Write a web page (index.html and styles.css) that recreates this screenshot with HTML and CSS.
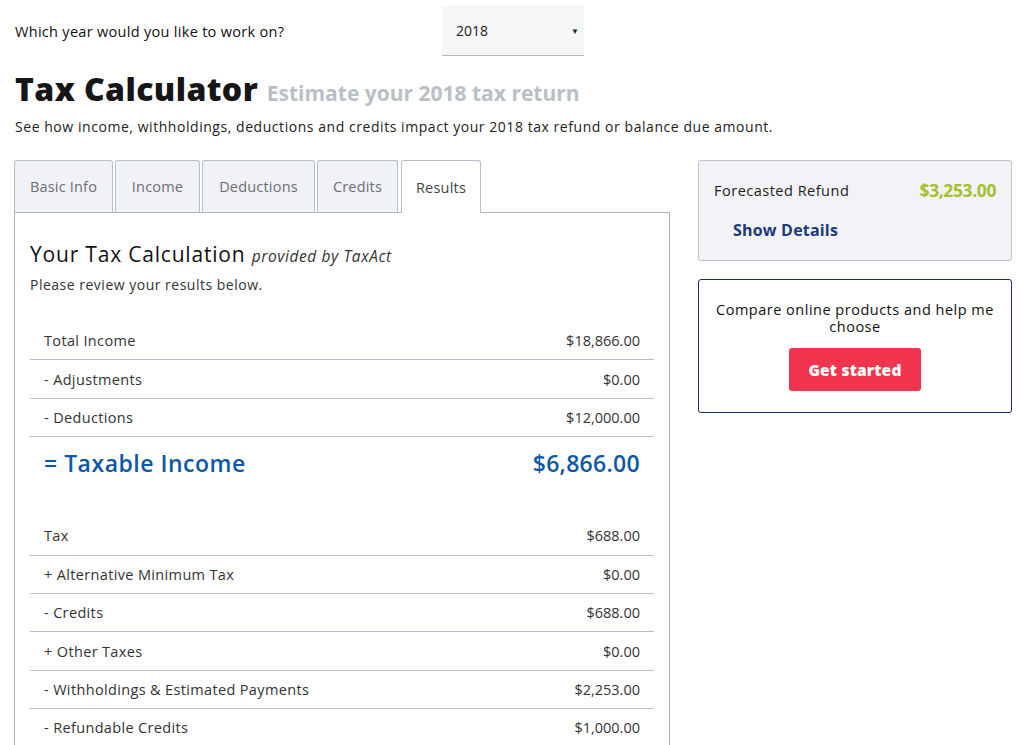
FILE: index.html
```html
<!DOCTYPE html>
<html>
<head>
<meta charset="utf-8">
<link rel="stylesheet" href="styles.css">
</head>
<body>
<div class="page">
  <div class="year-row">
    <label class="year-label">Which year would you like to work on?</label>
    <div class="year-select"><span>2018</span><span class="caret">▼</span></div>
  </div>
  <h1 class="title">Tax Calculator <span class="subtitle">Estimate your 2018 tax return</span></h1>
  <p class="intro">See how income, withholdings, deductions and credits impact your 2018 tax refund or balance due amount.</p>

  <div class="layout">
    <div class="main">
      <div class="tabs">
        <div class="tab t1">Basic Info</div>
        <div class="tab t2">Income</div>
        <div class="tab t3">Deductions</div>
        <div class="tab t4">Credits</div>
        <div class="tab t5 active">Results</div>
      </div>
      <div class="panel">
        <h2 class="calc-title">Your Tax Calculation <em>provided by TaxAct</em></h2>
        <p class="review">Please review your results below.</p>
        <div class="rows">
          <div class="row"><span>Total Income</span><span>$18,866.00</span></div>
          <div class="row"><span>- Adjustments</span><span>$0.00</span></div>
          <div class="row"><span>- Deductions</span><span>$12,000.00</span></div>
          <div class="row total"><span>= Taxable Income</span><span>$6,866.00</span></div>
        </div>
        <div class="rows second">
          <div class="row"><span>Tax</span><span>$688.00</span></div>
          <div class="row"><span>+ Alternative Minimum Tax</span><span>$0.00</span></div>
          <div class="row"><span>- Credits</span><span>$688.00</span></div>
          <div class="row"><span>+ Other Taxes</span><span>$0.00</span></div>
          <div class="row"><span>- Withholdings &amp; Estimated Payments</span><span>$2,253.00</span></div>
          <div class="row"><span>- Refundable Credits</span><span>$1,000.00</span></div>
        </div>
      </div>
    </div>
    <aside class="side">
      <div class="refund-box">
        <div class="refund-line"><span class="refund-label">Forecasted Refund</span><span class="refund-amt">$3,253.00</span></div>
        <a class="details">Show Details</a>
      </div>
      <div class="compare-box">
        <p class="compare-text">Compare online products and help me choose</p>
        <button class="start">Get started</button>
      </div>
    </aside>
  </div>
</div>
</body>
</html>
```

FILE: styles.css
```css
* { box-sizing: border-box; }
html, body { margin: 0; padding: 0; background: #fff; }
body {
  font-family: "Open Sans", "Lato", sans-serif;
  color: #1a1a1a;
  overflow: hidden;
}
.page { padding: 6px 8px 0 14px; }

.year-row { display: flex; align-items: center; height: 50px; }
.year-label { font-size: 14.5px; color: #111; width: 428px; padding-left: 1px; letter-spacing: 0.3px; }
.year-select {
  width: 142px; height: 50px;
  background: #f5f6f6;
  border-bottom: 1px solid #b8b8b8;
  display: flex; align-items: center; justify-content: space-between;
  padding: 0 5px 0 14px;
  font-size: 14px; color: #222;
}
.caret { font-size: 8px; color: #222; }

.title {
  margin: 13px 0 0 0; padding-left: 1px;
  font-size: 32px; font-weight: 800; color: #161616; line-height: 40px;
  letter-spacing: 0.4px;
}
.subtitle { font-size: 21px; font-weight: 700; color: #b8bfc6; letter-spacing: 0; }
.intro { margin: 4px 0 0 0; font-size: 14px; color: #222; line-height: 20px; padding-left: 1px; letter-spacing: 0.55px; }

.layout { display: flex; gap: 28px; margin-top: 23px; align-items: flex-start; }
.main { width: 656px; }
.tabs { display: flex; gap: 2px; height: 52px; }
.tab {
  background: #f1f2f6;
  border: 1px solid #b6bfcc;
  border-bottom: none;
  border-radius: 3px 3px 0 0;
  display: flex; align-items: center; justify-content: center;
  font-size: 14.5px; color: #6b6e75;
  letter-spacing: 0.2px;
}
.t1 { width: 99px; }
.t2 { width: 85px; }
.t3 { width: 113px; }
.t4 { width: 81px; margin-right: 1px; }
.t5 { width: 80px; }
.tab.active { background: #fff; color: #444; height: 53px; position: relative; z-index: 1; }

.panel {
  border: 1px solid #a9b5c6;
  border-bottom: none;
  padding: 26px 15px 0 15px;
  height: 540px;
}
.calc-title { margin: 0; font-size: 21px; font-weight: 500; color: #111; line-height: 30px; letter-spacing: 0.8px; }
.calc-title em { font-size: 15.5px; font-weight: 400; color: #333; letter-spacing: 0.6px; }
.review { margin: 4px 0 0 0; font-size: 14px; color: #333; line-height: 20px; letter-spacing: 0.5px; }

.rows { margin-top: 27px; }
.rows.second { margin-top: 28px; }
.row {
  display: flex; justify-content: space-between; align-items: center;
  height: 38.4px; padding: 0 14px;
  border-bottom: 1px solid #b3bfcc;
  font-size: 14.5px; color: #333;
  letter-spacing: 0.35px;
}
.row span:last-child { letter-spacing: 0; }
.row.total {
  border-bottom: none; height: 52px;
  font-size: 23px; font-weight: 600; color: #0d58a6;
  letter-spacing: 0.5px;
}
.row.total span:last-child { letter-spacing: 0.3px; }

.side { width: 314px; display: flex; flex-direction: column; gap: 18px; }
.refund-box {
  height: 101px;
  background: #f2f2f7;
  border: 1px solid #b9c3d0;
  border-radius: 3px;
  padding: 17px 15px 0 15px;
}
.refund-line { display: flex; justify-content: space-between; align-items: center; }
.refund-label { font-size: 14.5px; color: #1a1a1a; letter-spacing: 0.5px; }
.refund-amt { font-size: 17.5px; font-weight: 700; color: #a3c12d; letter-spacing: -0.4px; }
.details { display: block; margin: 17px 0 0 19px; font-size: 16px; font-weight: 700; color: #1b3a7c; letter-spacing: 0.2px; }

.compare-box {
  height: 134px;
  border: 1px solid #1b2d66;
  border-radius: 3px;
  padding: 21px 10px 0;
  text-align: center;
}
.compare-text { margin: 0; font-size: 14.5px; line-height: 17px; color: #111; letter-spacing: 0.5px; }
.start {
  margin-top: 13px;
  width: 132px; height: 43px;
  background: #f2354e; color: #fff;
  border: none; border-radius: 3px;
  font-family: inherit; font-size: 15.5px; font-weight: 800;
  letter-spacing: 0.2px;
}
```
